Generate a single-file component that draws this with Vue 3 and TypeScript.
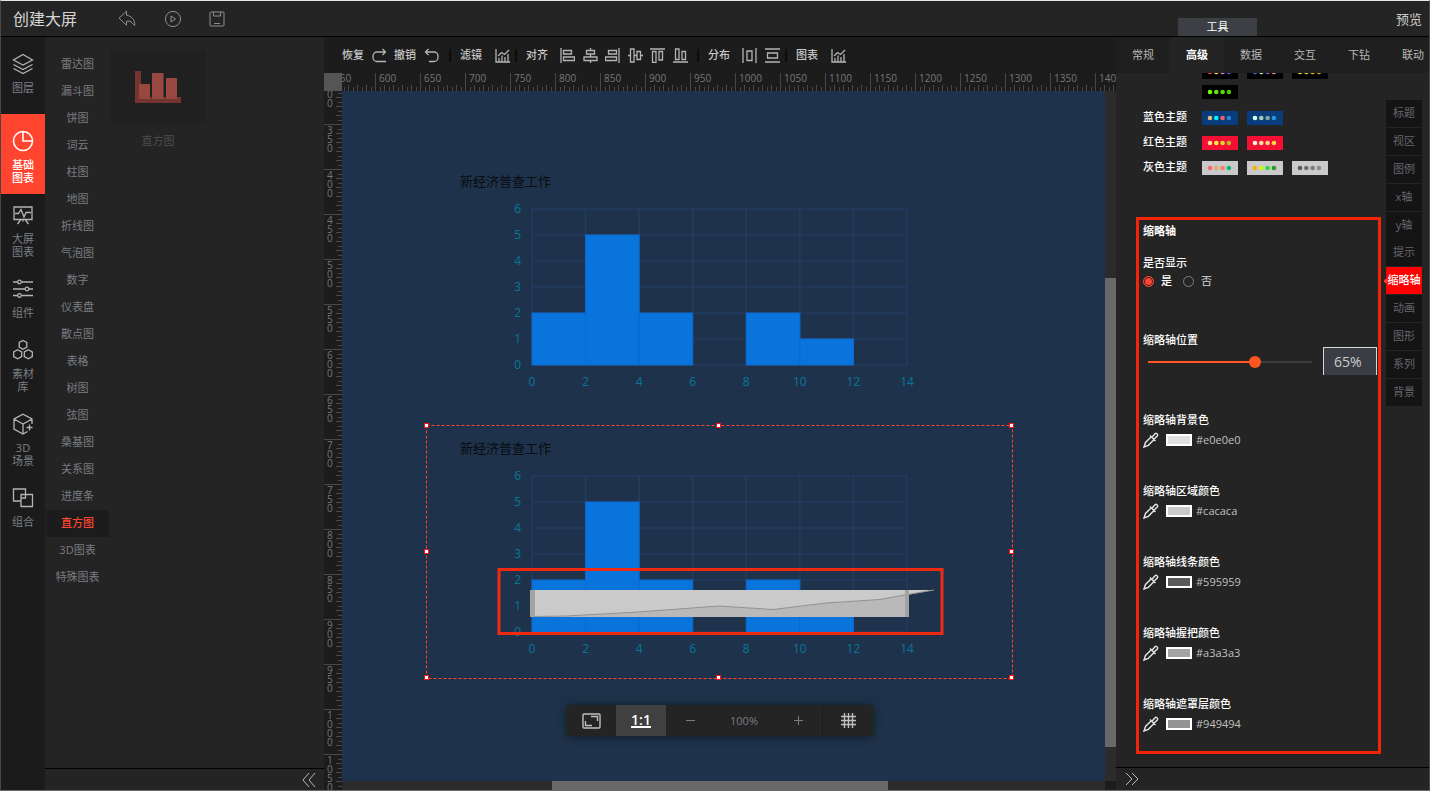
<script setup lang="ts">
import { computed, ref } from 'vue'

interface RailItem { icon: string; lines: string[]; kind?: string }
interface Tick { pos: number; size: number }

const rail: RailItem[] = [
  { icon: 'layers', lines: ['图层'], kind: 'first' },
  { icon: 'pie', lines: ['基础', '图表'], kind: 'active' },
  { icon: 'board', lines: ['大屏', '图表'] },
  { icon: 'sliders', lines: ['组件'] },
  { icon: 'hexes', lines: ['素材', '库'] },
  { icon: 'cube', lines: ['3D', '场景'] },
  { icon: 'combine', lines: ['组合'] },
]

const categories = [
  '雷达图', '漏斗图', '饼图', '词云', '柱图', '地图', '折线图', '气泡图', '数字', '仪表盘',
  '散点图', '表格', '树图', '弦图', '桑基图', '关系图', '进度条', '直方图', '3D图表', '特殊图表',
]
const activeCategory = ref('直方图')

const tabs = ['常规', '高级', '数据', '交互', '下钻', '联动']
const activeTab = ref('高级')

const sections = ['标题', '视区', '图例', 'x轴', 'y轴', '提示', '缩略轴', '动画', '图形', '系列', '背景']
const activeSection = ref('缩略轴')

const themes = [
  {
    name: '', tone: 'black', swatches: [
      ['#e8432f', '#f4e04a', '#e58ad0', '#4a50e0'],
      ['#5a50e8', '#b8f0a0', '#8a50f0', '#f08a70'],
      ['#e8d020', '#d8c820', '#e8b820', '#c8b020'],
      ['#66ff00', '#66e800', '#58d800', '#4cc800'],
    ],
  },
  {
    name: '蓝色主题', tone: 'blue', swatches: [
      ['#dcc07a', '#00f6ff', '#f4605c', '#2a86d0'],
      ['#d4fff0', '#a8ccb8', '#84a898', '#2c94d0'],
    ],
  },
  {
    name: '红色主题', tone: 'red', swatches: [
      ['#ffe48c', '#ffe838', '#d8d838', '#b8b830'],
      ['#fff4e0', '#ffe4a0', '#ffd878', '#ffd850'],
    ],
  },
  {
    name: '灰色主题', tone: 'grey', swatches: [
      ['#f86c70', '#f0a868', '#f88068', '#08b878'],
      ['#f8b008', '#c8f808', '#38d838', '#289828'],
      ['#585c60', '#686c70', '#787c80', '#888c90'],
    ],
  },
]

const colors = [
  { label: '缩略轴背景色', value: '#e0e0e0' },
  { label: '缩略轴区域颜色', value: '#cacaca' },
  { label: '缩略轴线条颜色', value: '#595959' },
  { label: '缩略轴握把颜色', value: '#a3a3a3' },
  { label: '缩略轴遮罩层颜色', value: '#949494' },
]

const shown = ref('yes')
const position = ref(65)
const trackFill = computed(() => ({ '--fill': position.value + '%' }))

/* Ruler: 0.9px per unit, one labelled mark every 50 units */
const OFFSET = 33
function marks(start: number, end: number, base: number): { value: number; pos: number }[] {
  const out: { value: number; pos: number }[] = []
  for (let v = start; v <= end; v += 50) out.push({ value: v, pos: OFFSET + (v - base) * 0.9 })
  return out
}
function ticks(start: number, end: number, base: number): Tick[] {
  const out: Tick[] = []
  for (let v = start; v <= end; v += 5) {
    const size = v % 50 === 0 ? 18 : v % 10 === 0 ? 6 : 4
    out.push({ pos: Math.round(OFFSET + (v - base) * 0.9), size })
  }
  return out
}
const hMarks = marks(550, 1400, 600)
const hTicks = ticks(550, 2600, 600)
const vMarks = marks(300, 1050, 350)
const vTicks = ticks(300, 1500, 350)

/* Histogram geometry */
const X0 = 106
const Y0 = 207
const STEP_X = 375 / 7
const STEP_Y = 26
const counts = [2, 5, 2, 0, 2, 1, 0]
const xs = [0, 1, 2, 3, 4, 5, 6, 7]
const ys = [0, 1, 2, 3, 4, 5, 6]
const charts = [{ id: 'plain', selected: false }, { id: 'zoomed', selected: true }]
const handles = ['nw', 'n', 'ne', 'w', 'e', 'sw', 's', 'se']
</script>

<template>
  <div class="app">
    <header class="header">
      <h1>创建大屏</h1>
      <button class="icon-btn back" aria-label="返回">
        <svg width="18" height="17" viewBox="0 0 18 17"><path d="M8.500 1.200 1 8.200l7.500 7v-4h3.500c1.500 1 3 2.600 4.700 4.300C17 9.500 13.500 6 8.500 5.200z" /></svg>
      </button>
      <button class="icon-btn play" aria-label="播放">
        <svg width="18" height="18" viewBox="0 0 18 18"><circle cx="9" cy="9" r="7.600" /><path d="M7 6v6l4.500-3z" /></svg>
      </button>
      <button class="icon-btn" aria-label="保存">
        <svg width="16" height="16" viewBox="0 0 16 16"><rect x="1" y="1" width="14" height="14" rx="1" /><path d="M4.500 1v4h7V1M5 12.500h6" /></svg>
      </button>
      <span class="grow"></span>
      <div class="tools-slot"><button class="tools">工具</button></div>
      <a href="#" class="preview">预览</a>
    </header>

    <div class="body">
      <nav class="rail">
        <a v-for="item in rail" :key="item.icon" href="#" class="rail-item" :class="item.kind">
          <svg width="22" height="22" viewBox="0 0 22 22">
            <template v-if="item.icon === 'layers'">
              <path d="M11 1.500 20.500 7 11 12 1.500 7zM1.500 11.500 11 16.500l9.500-5M1.500 15.500 11 20.500l9.500-5" />
            </template>
            <template v-else-if="item.icon === 'pie'">
              <circle cx="11" cy="11" r="9.500" /><path d="M11 1.500V11h9.500" />
            </template>
            <template v-else-if="item.icon === 'board'">
              <path d="M2 3h18v12.500H2zM11 15.500v2M8.500 16l-3 4M13.500 16l3 4M3 9.500h3.500L9 5.500l3 7.500 2-4.500h5" />
            </template>
            <template v-else-if="item.icon === 'sliders'">
              <path d="M1 4h4.500M9.500 4H21M1 11h12M17 11h4M1 17.500h4.500M9.500 17.500H21" />
              <circle cx="7.500" cy="4" r="1.800" /><circle cx="15" cy="11" r="1.800" /><circle cx="7.500" cy="17.500" r="1.800" />
            </template>
            <template v-else-if="item.icon === 'hexes'">
              <path d="M11 1.500 14.800 3.500v4.600L11 10.200 7.200 8.100V3.500zM5.700 10.700l4 2.200v4.600l-4 2.200-4-2.200v-4.600zM16.300 10.700l4 2.200v4.600l-4 2.200-4-2.200v-4.600z" />
            </template>
            <template v-else-if="item.icon === 'cube'">
              <path d="M20 11V6L11 1.200 2 6v10l9 5 4.500-2.500M2 6l9 5 9-5M11 11v10M17.500 11.500v6M14.500 14.500h6" />
            </template>
            <template v-else>
              <path d="M13.500 7.500V2H1.500v12H9M9 7.500h11.500v12H9zM9 11h4.500V7.500" />
            </template>
          </svg>
          <span class="rail-text"><span v-for="line in item.lines" :key="line">{{ line }}</span></span>
        </a>
      </nav>

      <aside class="library">
        <div class="library-main">
          <ul class="categories">
            <li v-for="name in categories" :key="name">
              <button :class="{ active: name === activeCategory }" @click="activeCategory = name">{{ name }}</button>
            </li>
          </ul>
          <figure class="card">
            <div class="thumb">
              <svg width="48" height="34" viewBox="0 0 48 34">
                <path class="axis" d="M1 1h6v26h40v6H1z" />
                <path class="bar" d="M5 14h11v15H5zM18 3h11.500v26H18zM32 8h11v21H32z" />
              </svg>
            </div>
            <figcaption>直方图</figcaption>
          </figure>
        </div>
        <footer class="foot foot-left">
          <button class="fold" aria-label="收起">
            <svg width="14" height="16" viewBox="0 0 14 16"><path d="M7 1 1 8l6 7M13 1 7 8l6 7" /></svg>
          </button>
        </footer>
      </aside>

      <main class="stage">
        <div class="toolbar">
          <button class="tool">恢复<svg class="ml8" width="15" height="15" viewBox="0 0 15 15"><path d="M10.500 1 13.500 4l-3 3M13.500 4H5a4 4 0 0 0-4 4v1.500a4 4 0 0 0 4 4h9" /></svg></button>
          <button class="tool undo">撤销<svg class="ml8" width="15" height="15" viewBox="0 0 15 15"><path d="M4.500 1 1.500 4l3 3M1.500 4H10a4 4 0 0 1 4 4v1.500a4 4 0 0 1-4 4H5" /></svg></button>
          <i class="sep"></i>
          <button class="tool">滤镜<svg class="ml13" width="15" height="15" viewBox="0 0 15 15"><path d="M1 1v13h14M4 14V10M7 14V7.500M10 14V9M13 14V6M3 8l3.500-3.500 3 2L14 2" /></svg></button>
          <i class="sep tight"></i>
          <span class="tool-label">对齐</span>
          <div class="align-group">
            <button aria-label="左对齐"><svg width="15" height="15" viewBox="0 0 15 15"><path d="M1 0v15M3.500 2.500h8v3.500h-8zM3.500 9h11v3.500h-11z" /></svg></button>
            <button aria-label="水平居中"><svg width="15" height="15" viewBox="0 0 15 15"><path d="M7.500 0v2.500M7.500 6v3M7.500 12.500V15M3.500 2.500h8v3.500h-8zM1 9h13v3.500H1z" /></svg></button>
            <button aria-label="右对齐"><svg width="15" height="15" viewBox="0 0 15 15"><path d="M14 0v15M3.500 2.500h8v3.500h-8zM.5 9h11v3.500H.5z" /></svg></button>
            <button aria-label="垂直居中"><svg width="15" height="15" viewBox="0 0 15 15"><path d="M0 7.500h2.500M6 7.500h3M12.500 7.500H15M2.500 1H6v13H2.500zM9 3.500h3.500v8H9z" /></svg></button>
            <button aria-label="顶对齐"><svg width="15" height="15" viewBox="0 0 15 15"><path d="M0 1h15M2.500 3.500H6v11H2.500zM9 3.500h3.500v8.500H9z" /></svg></button>
            <button aria-label="底对齐"><svg width="15" height="15" viewBox="0 0 15 15"><path d="M0 14h15M2.500 1H6v10.500H2.500zM9 3.500h3.500v8H9z" /></svg></button>
          </div>
          <i class="sep"></i>
          <span class="tool-label">分布</span>
          <div class="spread-group">
            <button aria-label="水平分布"><svg width="15" height="15" viewBox="0 0 15 15"><path d="M1 0v15M14 0v15M5 3h5v9.500H5z" /></svg></button>
            <button aria-label="垂直分布"><svg width="15" height="15" viewBox="0 0 15 15"><path d="M0 1h15M0 14h15M2.500 5h10v5h-10z" /></svg></button>
          </div>
          <i class="sep tight"></i>
          <button class="tool">图表<svg class="ml13" width="15" height="15" viewBox="0 0 15 15"><path d="M1 1v13h14M4 14V10M7 14V7.500M10 14V9M13 14V6M3 8l3.500-3.500 3 2L14 2" /></svg></button>
        </div>

        <div class="corner"></div>
        <svg class="ruler ruler-h" height="18">
          <path v-for="t in hTicks" :key="t.pos" :d="`M${t.pos + 0.5} ${18 - t.size}v${t.size}`" />
          <text v-for="m in hMarks" :key="m.value" :x="m.pos + 4" y="9">{{ m.value }}</text>
        </svg>
        <svg class="ruler ruler-v" width="18">
          <path v-for="t in vTicks" :key="t.pos" :d="`M${18 - t.size} ${t.pos + 0.5}h${t.size}`" />
          <text v-for="m in vMarks" :key="m.value">
            <tspan v-for="(d, i) in String(m.value)" :key="i" x="3" :y="Math.round(m.pos) + 10 + i * 9">{{ d }}</tspan>
          </text>
        </svg>

        <div class="canvas">
          <div v-for="c in charts" :key="c.id" class="widget" :class="c.id">
            <svg width="587" height="254" viewBox="0 0 587 254">
              <text class="title" x="34" y="28">新经济普查工作</text>
              <path v-for="y in ys" :key="'h' + y" class="grid" :d="`M${X0} ${Y0 - y * STEP_Y}H481`" />
              <path v-for="x in xs" :key="'v' + x" class="grid" :d="`M${X0 + x * STEP_X} 51V${Y0}`" />
              <rect
                v-for="(n, i) in counts" :key="'b' + i" class="column"
                :x="X0 + i * STEP_X" :y="Y0 - n * STEP_Y" :width="n ? STEP_X : 0" :height="n * STEP_Y"
              />
              <text v-for="y in ys" :key="'y' + y" class="tick" text-anchor="end" x="95" :y="Y0 - y * STEP_Y + 4">{{ y }}</text>
              <text v-for="x in xs" :key="'x' + x" class="tick" text-anchor="middle" :x="X0 + x * STEP_X" y="228">{{ x * 2 }}</text>
              <g v-if="c.selected">
                <path class="zoom-bg" d="M106 165H508L481 170V192H106z" />
                <path class="zoom-area" d="M106 192 140 191 212 187 293 181 347 184.500 400 178 454 174.500 481 169.500V192z" />
                <path class="zoom-line" d="M106 191.500 140 191 212 187 293 181 347 184.500 400 178 454 174.500 481 169.500 508 165" />
                <path class="zoom-grip" d="M104 165h5v27h-5zM479 165h4v27h-4z" />
                <rect class="note" x="73" y="144.500" width="443" height="64" />
                <path class="frame" d="M.5.5H586.500V253.500M.5.5V253.500H586.500" />
              </g>
            </svg>
            <template v-if="c.selected">
              <i v-for="h in handles" :key="h" class="handle" :class="h"></i>
            </template>
          </div>
        </div>

        <div class="bar-v"><i></i></div>
        <div class="bar-h"><i></i></div>
        <div class="bar-corner"></div>

        <div class="zoombar">
          <button class="cell" aria-label="适应屏幕">
            <svg width="19" height="16" viewBox="0 0 19 16"><rect x="1" y="1" width="17" height="14" rx="1" /><path d="M9 3.500h6.500V8M10 12.500H3.500V8" /></svg>
          </button>
          <button class="cell ratio"><span>1:1</span></button>
          <button class="step" aria-label="缩小"><svg width="11" height="11" viewBox="0 0 11 11"><path d="M1 5.500h9" /></svg></button>
          <output>100%</output>
          <button class="step" aria-label="放大"><svg width="11" height="11" viewBox="0 0 11 11"><path d="M1 5.500h9M5.500 1v9" /></svg></button>
          <button class="cell gridbtn" aria-label="网格">
            <svg width="15" height="15" viewBox="0 0 15 15"><path d="M3.500 0v15M7.500 0v15M11.500 0v15M0 3.500h15M0 7.500h15M0 11.500h15" /></svg>
          </button>
        </div>
      </main>

      <aside class="inspector">
        <div class="tabs">
          <button v-for="t in tabs" :key="t" :class="{ active: t === activeTab }" @click="activeTab = t">{{ t }}</button>
        </div>
        <div class="inspector-main">
          <div class="form">
            <div class="themes">
              <div v-for="t in themes" :key="t.tone" class="theme" :class="t.tone">
                <span class="theme-name">{{ t.name }}</span>
                <div class="swatches">
                  <button v-for="(dots, i) in t.swatches" :key="i" class="swatch" :aria-label="`主题 ${i + 1}`">
                    <svg width="36" height="14"><circle v-for="(d, k) in dots" :key="k" :cx="8 + k * 6.3" cy="7" r="2.300" :fill="d" /></svg>
                  </button>
                </div>
              </div>
            </div>

            <section class="thumb-axis">
              <h2>缩略轴</h2>
              <fieldset>
                <legend>是否显示</legend>
                <label><input v-model="shown" type="radio" name="shown" value="yes">是</label>
                <label class="dim"><input v-model="shown" type="radio" name="shown" value="no">否</label>
              </fieldset>
              <label class="caption" for="pos">缩略轴位置</label>
              <div class="slider-row">
                <input id="pos" v-model.number="position" type="range" min="0" max="100" :style="trackFill">
                <input class="percent" type="text" aria-label="缩略轴位置百分比" :value="position + '%'">
              </div>
              <div class="colors">
                <div v-for="c in colors" :key="c.label" class="color">
                  <div class="caption">{{ c.label }}</div>
                  <div class="color-row">
                    <svg class="dropper" width="16" height="16" viewBox="0 0 16 16"><path d="M8.500 4.500 2.500 10.500 1 15l4.300-1.700 6-6M7 3.500l5.500 5.500M9 5.300 12 1.700c1-1 3.500.500 2.300 2.300L10.900 7.200" /></svg>
                    <button class="chip" :style="{ backgroundColor: c.value }" :aria-label="c.label"></button>
                    <span>{{ c.value }}</span>
                  </div>
                </div>
              </div>
            </section>
          </div>
          <nav class="sections">
            <button v-for="s in sections" :key="s" :class="{ active: s === activeSection }" @click="activeSection = s">{{ s }}</button>
          </nav>
        </div>
        <footer class="foot foot-right">
          <button class="fold" aria-label="展开">
            <svg width="14" height="14" viewBox="0 0 14 14"><path d="m1 1 6 6-6 6M7 1l6 6-6 6" /></svg>
          </button>
        </footer>
      </aside>
    </div>
  </div>
</template>

<style>
body { background: #242424; }
</style>

<style scoped>
* { box-sizing: border-box; }
.app {
  display: flex; flex-direction: column; height: 100vh; overflow: hidden;
  border: 1px solid #484848; border-top-color: #e4e7e4; border-bottom-color: #6a6a6a;
  background: #242424; color: #ccc;
  font: 11px/14px "Open Sans", "Noto Sans CJK SC", sans-serif;
}
button { padding: 0; border: 0; background: none; color: inherit; font: inherit; cursor: pointer; }
a { color: inherit; text-decoration: none; }
svg { display: block; flex: none; fill: none; stroke: currentColor; }

.header { display: flex; flex: none; align-items: center; height: 36px; padding-left: 12px; border-bottom: 1px solid #000; }
.header h1 { margin: 0; color: #d6d6d6; font-size: 16px; line-height: 22px; font-weight: 400; width: 65px; white-space: nowrap; }
.icon-btn { color: #8e8e8e; }
.back { margin-left: 40px; }
.play { margin: 0 27px 0 28px; }
.grow { flex: 1; }
.tools-slot { display: flex; flex: none; align-items: flex-end; align-self: stretch; width: 313px; padding-left: 62px; margin-right: -33px; }
.tools { width: 79px; height: 18px; background: #3c3f44; color: #fff; }
.preview { width: 33px; font-size: 13px; line-height: 18px; white-space: nowrap; }

.body { display: flex; flex: 1; min-height: 0; }
.rail { flex: none; width: 44px; background: #1b1b1b; color: #7c7f84; overflow: hidden; }
.rail-item { display: flex; flex-direction: column; align-items: center; gap: 6px; padding: 10px 0; }
.rail-item svg { color: #b4b4b4; stroke-width: 1.3; }
.rail-item.first { padding: 16px 0 20px; }
.rail-item.active { padding: 16px 0 10px; background: #ff4530; color: #fff; font-weight: 500; }
.rail-item.active svg { color: #fff; stroke-width: 1.6; }
.rail-text { display: flex; flex-direction: column; align-items: center; line-height: 13px; }

.library { display: flex; flex: none; flex-direction: column; width: 279px; }
.library-main { display: flex; flex: 1; min-height: 0; padding: 14px 0 0 1px; overflow: hidden; }
.categories { width: 63px; margin: 0; padding: 0; list-style: none; }
.categories button { display: block; width: 100%; height: 27px; padding-bottom: 2px; color: #7a7d82; }
.categories .active { background: #1c1c1c; color: #ff4530; font-weight: 500; }
.card { margin: 0 0 0 1px; }
.thumb { display: flex; align-items: center; justify-content: center; width: 96px; height: 72px; background: #202020; }
.thumb svg { stroke: none; }
.axis { fill: #74342f; }
.bar { fill: #984840; }
.card figcaption { margin-top: 11px; text-align: center; color: #4c4e52; }
.foot { display: flex; flex: none; align-items: center; border-top: 1px solid #000; }
.foot-left { justify-content: flex-end; height: 22px; padding-right: 8px; }
.foot-right { height: 23px; padding-left: 9px; }
.fold { color: #b8b8b8; }

.stage {
  position: relative; display: grid; flex: 1; min-width: 0; min-height: 0;
  grid-template: 36px 18px minmax(0, 1fr) 9px / 18px minmax(0, 1fr) 11px;
  background: #1c1c1c;
}
.toolbar { display: flex; grid-column: 1 / -1; align-items: center; padding-left: 18px; white-space: nowrap; overflow: hidden; }
.toolbar, .tool { font-weight: 500; color: #c8c8c8; }
.tool { display: flex; flex: none; align-items: center; }
.toolbar svg { stroke-width: 1.3; color: #b4b4b4; }
.undo { margin: 0 1px 0 7px; }
.ml8 { margin-left: 8px; }
.ml13 { margin-left: 13px; }
.sep { flex: none; width: 2px; height: 13px; margin: 0 9px; background: #0c0c0c; }
.tight { margin-left: 5px; }
.align-group, .spread-group { display: flex; flex: none; justify-content: space-between; margin-left: 12px; }
.align-group { width: 128px; }
.spread-group { width: 38px; }
.corner { background: #555; }
.ruler { background: #1c1c1c; overflow: hidden; }
.ruler path { stroke: #484848; }
.ruler text { fill: #777; stroke: none; font-size: 10px; }
.ruler-h { grid-column: 2 / -1; width: 100%; }
.ruler-v { grid-row: 3 / -1; height: 100%; }
.canvas { position: relative; overflow: hidden; background: #1e334b; }
.bar-v { background: #2b2b2b; }
.bar-v i { display: block; height: 68%; margin-top: 187px; background: #696969; }
.bar-h { grid-column: 2; background: #2b2b2b; }
.bar-h i { display: block; width: 44%; height: 100%; margin-left: 210px; background: #696969; }
.bar-corner { background: #1c1c1c; }

.widget { position: absolute; left: 84px; top: 67px; }
.zoomed { top: 334px; }
.frame { stroke: #ff4530; stroke-dasharray: 3 2; }
.title { fill: #090c11; stroke: none; font-size: 13px; }
.grid { stroke: #223d60; stroke-width: 1.5; }
.column { fill: #0a74dd; stroke: #0b6bce; stroke-width: 1; }
.tick { fill: #08769a; stroke: none; font-size: 12px; }
.zoom-bg { fill: #cacaca; stroke: none; }
.zoom-area { fill: #b9b9b9; stroke: none; }
.zoom-line { stroke: #929292; }
.zoom-grip { fill: #a3a3a3; stroke: none; }
.note { stroke: #f02a12; stroke-width: 3; }
.handle { position: absolute; width: 5px; height: 5px; border: 1px solid #ff1010; background: #fff; }
.nw, .w, .sw { left: -2px; }
.n, .s { left: 290px; }
.ne, .e, .se { right: -1px; }
.nw, .n, .ne { top: -2px; }
.w, .e { top: 124px; }
.sw, .s, .se { bottom: -1px; }

.zoombar {
  position: absolute; left: 50%; bottom: 54px; display: flex; align-items: center; height: 31px;
  transform: translateX(-50%); background: #242424; color: #7a7d82; box-shadow: 0 1px 10px #111a24;
}
.cell { display: flex; align-items: center; justify-content: center; width: 49px; height: 31px; color: #c0c0c0; }
.cell svg { stroke-width: 1.4; }
.ratio { width: 50px; background: #404040; color: #fff; }
.ratio span { border-bottom: 2px solid #fff; font-size: 14px; font-weight: 600; line-height: 13px; }
.step { display: flex; justify-content: center; width: 48px; }
.zoombar output { width: 60px; text-align: center; }
.gridbtn { width: 51px; border-left: 1px solid #1a1a1a; }

.inspector { display: flex; flex: none; flex-direction: column; width: 313px; }
.tabs { display: flex; flex: none; height: 36px; background: #1f1f1f; overflow: hidden; }
.tabs button { flex: none; width: 54px; color: #b8b8b8; }
.tabs .active { background: #242424; color: #fff; font-weight: 700; }
.inspector-main { display: flex; flex: 1; min-height: 0; overflow: hidden; }
.form { flex: none; width: 265px; padding-left: 20px; color: #fff; }
.themes { margin-top: -8px; padding-left: 7px; }
.theme { display: flex; height: 25px; }
.theme.black { height: 46px; }
.theme-name { width: 59px; line-height: 12px; font-weight: 500; }
.swatches { display: grid; grid-template-columns: repeat(3, 36px); gap: 6px 9px; align-content: start; }
.swatch { height: 14px; }
.swatch svg { stroke: none; }
.black .swatch { background: #000; }
.blue .swatch { background: #083c7c; }
.red .swatch { background: #f40f34; }
.grey .swatch { background: #cacaca; }

.thumb-axis { margin-top: 31px; padding: 4px 0 20px 4px; border: 3px solid #f42408; font-weight: 500; }
.thumb-axis h2 { margin: 0; font-size: 11px; line-height: 14px; font-weight: 700; }
fieldset { display: flex; flex-wrap: wrap; align-items: center; margin: 18px 0 0; padding: 0; border: 0; }
legend { padding: 0; margin-bottom: 4px; line-height: 14px; }
fieldset label { display: flex; align-items: center; margin-right: 11px; line-height: 14px; }
.dim { color: #b8b8b8; }
input[type="radio"] { appearance: none; width: 11px; height: 11px; margin: 0 7px 0 0; border: 1px solid #808080; border-radius: 50%; }
input[type="radio"]:checked { border-color: #ff4530; background: #ff4530; box-shadow: inset 0 0 0 1px #242424; }
.caption { display: block; line-height: 14px; white-space: nowrap; }
fieldset + .caption { margin-top: 45px; }
.slider-row { display: flex; align-items: center; height: 28px; }
input[type="range"] { appearance: none; width: 176px; height: 12px; margin: 2px 5px 0 -1px; background: none; }
input[type="range"]::-webkit-slider-runnable-track {
  height: 2px;
  background: linear-gradient(90deg, #ff5722 var(--fill), #3c3c3c var(--fill)) 6px 0 / calc(100% - 12px) 2px no-repeat;
}
input[type="range"]::-webkit-slider-thumb { appearance: none; width: 12px; height: 12px; margin-top: -5px; border-radius: 50%; background: #ff5722; }
.percent { width: 54px; height: 28px; padding: 0 0 0 10px; border: 1px solid #d8d8d8; border-bottom: 0; border-radius: 0; background: #3a3e44; color: #ccc; font: inherit; font-size: 14px; font-weight: 400; }
.colors { margin-top: 38px; }
.color + .color { margin-top: 37px; }
.color-row { display: flex; align-items: center; height: 20px; padding-top: 6px; color: #c0c0c0; font-weight: 400; }
.dropper { color: #e4e4e4; stroke-width: 1.4; }
.chip { width: 26px; height: 12px; margin: 0 4px 0 7px; border: 2px solid #fff; }

.sections { display: flex; flex: none; flex-direction: column; gap: 1px; width: 36px; margin: 27px 0 0 5px; }
.sections button { position: relative; height: 27px; padding-bottom: 2px; background: #141414; color: #66686c; white-space: nowrap; }
.sections button:nth-child(5) { margin-bottom: -1px; }
.sections .active { background: #f00; color: #fff; font-weight: 500; }
.sections .active::before { content: ""; position: absolute; left: -2px; top: 12px; width: 4px; height: 4px; border-radius: 50%; background: #ff4530; }
</style>
